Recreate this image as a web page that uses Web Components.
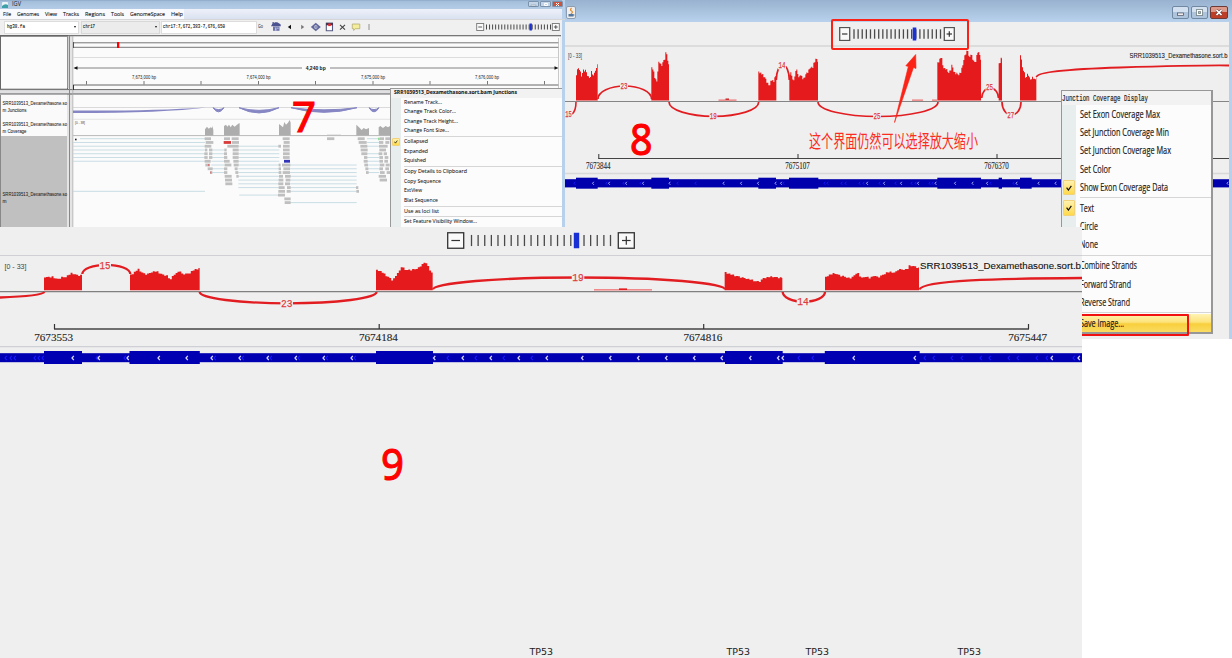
<!DOCTYPE html>
<html lang="en">
<head>
<meta charset="utf-8">
<title>IGV</title>
<style>
html,body{margin:0;padding:0;background:#fff;overflow:hidden}
body{width:1232px;height:658px;position:relative;font-family:"Open Sans","Noto Sans",sans-serif;color:#222}
</style>
</head>
<body>
<igv-desktop></igv-desktop>
<script>
const make = (name, html, after) => customElements.define(name, class extends HTMLElement {
  connectedCallback() {
    if (this.shadowRoot) return;
    const t = document.createElement('template');
    t.innerHTML = typeof html === 'function' ? html(this) : html;
    this.attachShadow({mode: 'open'}).appendChild(t.content.cloneNode(true));
    if (after) after(this);
  }
});

/* ---------- drawing helpers ---------- */
const f = n => Math.round(n * 100) / 100;
// Stepped coverage histogram from a coarse profile, with a little read-depth noise
function hist(pts, ox, oy, base, step, noise) {
  const p = []; for (let i = 0; i < pts.length; i += 2) p.push([ox + pts[i] / 3, oy + pts[i + 1] / 3]);
  const x0 = p[0][0], x1 = p[p.length - 1][0];
  let d = `M${f(x0)} ${base}`, k = 0, n = 0;
  for (let x = x0; x < x1 - .05; x += step) {
    const m = Math.min(x + step / 2, x1);
    while (k < p.length - 2 && p[k + 1][0] < m) k++;
    const a = p[k], b = p[k + 1], r = Math.min(1, (m - a[0]) / (b[0] - a[0] || 1));
    const y = a[1] + (b[1] - a[1]) * r + [0, .6, -.5, .2, -.8, .7, 0, -.3, .9, -.6][n++ % 10] * noise;
    d += `V${f(y)}H${f(Math.min(x + step, x1))}`;
  }
  return `<path d="${d}V${base}Z" fill="#e51a1c"/>`;
}
// Half-ellipse junction arc between two points on the same level
const arc = (x0, y, x1, peak, w = 2.3) =>
  `<path d="M${x0} ${y}A${f((x1 - x0) / 2)} ${f(Math.abs(peak - y))} 0 0 ${peak < y ? 1 : 0} ${x1} ${y}" fill="none" stroke="#e21d22" stroke-width="${w}"/>`;
const num = (t, x, y, w, s) =>
  `<rect x="${x - w / 2 - .5}" y="${y - s * .75}" width="${w + 1}" height="${s * .9}" fill="#efefef"/><text x="${x}" y="${y}" text-anchor="middle" textLength="${w}" lengthAdjust="spacingAndGlyphs" font-family="Liberation Mono" font-size="${s}" fill="#e0393c" stroke="#e0393c" stroke-width=".25">${t}</text>`;
const txt = (t, x, y, w, s, fam = 'Open Sans', fill = '#222', extra = '') =>
  `<text x="${x}" y="${y}" textLength="${w}" lengthAdjust="spacingAndGlyphs" font-family="${fam}" font-size="${s}" fill="${fill}" ${extra}>${t}</text>`;
const ln = (x0, y0, x1, y1, c, w = 1) => `<path d="M${x0} ${y0}L${x1} ${y1}" stroke="${c}" stroke-width="${w}"/>`;
const box = (x, y, w, h, c) => `<rect x="${f(x)}" y="${f(y)}" width="${f(w)}" height="${f(h)}" fill="${c}"/>`;
const chev = (xs, y, c, s, w = 1.1) => xs.map(x => `<path d="M${f(x + s)} ${y - s * 1.15}L${f(x)} ${y}L${f(x + s)} ${y + s * 1.15}" fill="none" stroke="${c}" stroke-width="${w}"/>`).join('');

/* ---------- desktop ---------- */
make('igv-desktop', `<style>
:host{display:block;position:relative;width:1232px;height:658px;background:#fff}
junction-window{position:absolute;left:562px;top:0}
igv-main{position:absolute;left:0;top:0}
sashimi-view{position:absolute;left:0;top:227px}
step-mark{position:absolute}
</style>
<junction-window></junction-window><igv-main></igv-main><sashimi-view></sashimi-view>
<step-mark style="left:291.5px;top:92px" size="41" w="24">7</step-mark>
<step-mark style="left:630px;top:113px" size="43" w="22.5">8</step-mark>
<step-mark style="left:381px;top:437px" size="43.5" w="23">9</step-mark>`);

make('step-mark', el => `<style>
:host{display:block;line-height:1.2;height:52px;color:#fe0000;-webkit-text-stroke:1.1px #fe0000;font-family:"Noto Sans",sans-serif;font-size:${el.getAttribute('size')}px}
</style><fit-text w="${el.getAttribute('w')}"><slot></slot></fit-text>`);

/* ---------- main IGV window ---------- */
make('igv-main', `<style>
:host{display:flex;flex-direction:column;width:565px;height:227px;overflow:hidden;background:#f0f0f0;font:6px/1 "Open Sans",sans-serif;color:#222}
.title{display:flex;align-items:center;height:9px;background:linear-gradient(90deg,transparent 562px,#b7d0eb 562px),linear-gradient(#8ba8c8 0,#a5bfdb 18%,#b4cce6 100%);gap:4px;padding:0 2px 0 2px;box-sizing:border-box;flex:none}
.title b{flex:1;font-weight:400}
.btns{display:flex;gap:1px}
.btns i{width:11px;height:6px;border:.5px solid #7c93ad;border-radius:1px;box-sizing:border-box;background:#c4d5e8;margin-bottom:1px}
.btns i svg{display:block;margin:auto}
.btns i:last-child{background:#c9553f}
.menu{display:flex;align-items:center;height:10px;padding:0 0 1px 3px;box-sizing:border-box;gap:6px;background:linear-gradient(90deg,transparent 562px,#b7d0eb 562px),linear-gradient(90deg,#f8fafd 0 184px,transparent 184px),linear-gradient(#eef1f9,#d9e1f0);flex:none;-webkit-text-stroke:.12px #222}
.tools{display:flex;align-items:center;height:16px;background:linear-gradient(90deg,#f0f0f0 562px,#b7d0eb 562px);border-top:1px solid #d6d6d6;box-sizing:border-box;padding:0 0 1px 4px;flex:none}
.combo{display:flex;align-items:center;justify-content:space-between;height:13px;padding:0 2px;box-sizing:border-box;background:#fff;border:.5px solid #ddd}
.combo.g{background:#ececec;border:1px solid #d8d8d8}
.combo fit-text{-webkit-text-stroke:.12px #222;font:5.5px/1 "Liberation Mono"}
.arr{width:0;height:0;border:1.8px solid transparent;border-top:2.4px solid #111;border-bottom:0}
svg{display:block}
.body{position:relative;flex:1}
popup-menu{position:absolute;left:390px;top:53px}
</style>
<div class="title"><svg width="6" height="6"><rect width="6" height="5" rx="1" fill="#e9f3f6"/><path d="M0 4q3-3 6-1v3H0z" fill="#3ba0a8"/></svg><b><fit-text w="9" style="font-size:6.5px">IGV</fit-text></b>
<div class="btns"><i><svg width="9" height="5"><rect x="2" y="3" width="5" height="1" fill="#fff" stroke="#567" stroke-width=".3"/></svg></i><i><svg width="9" height="5"><path d="M3.5 1.5h3v2h-3z" fill="none" stroke="#fff"/></svg></i><i><svg width="9" height="5"><path d="M3 1l3 3M6 1l-3 3" stroke="#fff"/></svg></i></div></div>
<div class="menu"><fit-text w="8">File</fit-text><fit-text w="22">Genomes</fit-text><fit-text w="12">View</fit-text><fit-text w="16">Tracks</fit-text><fit-text w="20">Regions</fit-text><fit-text w="13">Tools</fit-text><fit-text w="35">GenomeSpace</fit-text><fit-text w="12">Help</fit-text></div>
<div class="tools">
<div class="combo" style="width:75px"><fit-text w="18">hg38.fa</fit-text><span class="arr"></span></div>
<div class="combo g" style="width:79px;margin-left:2px;padding-left:1px"><fit-text w="12">chr17</fit-text><span class="arr"></span></div>
<div class="combo" style="width:96px;margin-left:1px;padding-left:1px"><fit-text w="62">chr17:7,672,383-7,676,650</fit-text></div>
<fit-text w="5" style="font-size:5.5px;margin-left:1px">Go</fit-text>
<svg width="110" height="14" viewBox="263 20 110 14" style="margin-right:103px">
<path d="M271 26.3l1.2-2.4 3-1.6h2l3.3 2 .4 2z" fill="#4b5290"/><path d="M273 26.5h6.5v4.3H273z" fill="#6b72aa"/><path d="M275 27.5h1.5v3.3H275zM277.3 27.5h1.2v1.5h-1.2z" fill="#b9bddb"/><path d="M272.5 22h1.3v2h-1.3z" fill="#4b5290"/>
<path d="M291 24.8v4.4l-3.2-2.2z" fill="#111"/><path d="M301.2 24.8v4.4l3-2.2z" fill="#777"/>
<path d="M310.8 27l5-4.3 5 4.3-5 4.3z" fill="#62699a"/><circle cx="315.8" cy="27" r="1.7" fill="#dfe2f2"/><path d="M314.6 27h2.5" stroke="#464e87"/>
<path d="M326.3 23.3h6.2v7.4h-6.2z" fill="#fff" stroke="#555b82" stroke-width="1.1"/><path d="M326 22.8h7v2.5h-7z" fill="#3d3956"/><path d="M328.2 23.5h2.6v2.6h-2.6z" fill="#e62828"/>
<path d="M340 24.8l5 4.9M345 24.8l-5 4.9" stroke="#444" stroke-width="1.1"/>
<path d="M352.3 24h7.5v4.7h-4.5l-1.6 1.8v-1.8h-1.4z" fill="#f3ed9c" stroke="#aaa36a" stroke-width=".7"/>
<path d="M369 24v6" stroke="#777" stroke-width=".8"/></svg>
<zoom-slider kind="small"></zoom-slider>
</div>
<div class="body"><igv-tracks></igv-tracks>
<popup-menu kind="small" heading="SRR1039513_Dexamethasone.sort.bam Junctions">
<menu-row w="38">Rename Track...</menu-row><menu-row w="52">Change Track Color...</menu-row><menu-row w="54">Change Track Height...</menu-row><menu-row w="45">Change Font Size...</menu-row><menu-sep></menu-sep>
<menu-row w="24" checked>Collapsed</menu-row><menu-row w="24">Expanded</menu-row><menu-row w="22">Squished</menu-row><menu-sep></menu-sep>
<menu-row w="63">Copy Details to Clipboard</menu-row><menu-row w="37">Copy Sequence</menu-row><menu-row w="18">ExtView</menu-row><menu-row w="34">Blat Sequence</menu-row><menu-sep></menu-sep>
<menu-row w="35">Use as loci list</menu-row><menu-sep></menu-sep><menu-row w="73">Set Feature Visibility Window...</menu-row>
</popup-menu></div>`);

make('igv-tracks', () => {
  let s = '';
  s += box(0, 35, 561, 192, '#e4e4e4');
  s += box(0, 35, 68, 55, '#666') + box(1, 36.7, 66, 52, '#fbfbfb');
  s += box(72.5, 35, 488, 55, '#fbfbfb') + box(68, 35, 493, 1.3, '#777');
  s += box(0, 89, 561, 1.3, '#777') + box(0, 90.3, 561, 3, '#e0dfe2') + box(0, 93.2, 561, 1.6, '#8b8b8e');
  s += box(0, 94.8, 67, 133, '#fafafa') + box(0, 95, 1, 133, '#888') + box(1, 136, 66, 92, '#c0c0c0');
  s += box(72.5, 94.8, 488, 133, '#fbfbfb');
  s += ln(69.5, 36, 69.5, 227, '#888') + ln(72.8, 36, 72.8, 227, '#aaa', .8) + ln(68, 36, 68, 88, '#bbb', 1);
  // cytoband and ruler
  s += ln(73, 42.8, 559, 42.8, '#777') + ln(73, 47.3, 559, 47.3, '#777') + ln(73.5, 42, 73.5, 48, '#555') + box(117, 42, 2.3, 6, '#f00');
  s += ln(73, 57.5, 558, 57.5, '#ddd') + ln(75, 68, 302, 68, '#666', .8) + ln(330, 68, 556, 68, '#666', .8);
  s += '<path d="M73.5 68l4-1.7v3.4zM558.5 68l-4-1.7v3.4z" fill="#111"/>';
  s += txt('4,240 bp', 305.7, 70.2, 20, 6, 'Liberation Sans', '#111', 'font-weight="bold"');
  [['7,673,000 bp', 144], ['7,674,000 bp', 258.5], ['7,675,000 bp', 373], ['7,676,000 bp', 487]].forEach(a => s += txt(a[0], a[1] - 12, 79, 24, 4.6, 'Liberation Sans', '#222'));
  [86.5, 144, 201, 258.5, 315.5, 373, 430, 487.5, 544.5].forEach(x => s += ln(x, 81, x, 84.5, '#555', .8));
  s += ln(73, 85, 559, 85, '#666') + ln(73.5, 85, 73.5, 90, '#333') + ln(558.5, 38, 558.5, 89, '#bbb', .8);
  // names
  const nm = 'SRR1039513_Dexamethasone.so';
  [[nm, 2.5, 105.2, 64.5], ['m Junctions', 2.5, 111.8, 24], [nm, 2.5, 125.8, 64.5], ['m Coverage', 2.5, 132.5, 24], [nm, 2.5, 196.2, 64.5], ['m', 2.5, 202.8, 4]].forEach(a => s += txt(...a, 4.5, 'Liberation Sans', '#222', 'stroke="#222" stroke-width=".05"'));
  s += ln(73, 107.5, 561, 107.5, '#ccc', .7) + ln(73, 119.3, 561, 119.3, '#ddd', .8) + ln(73, 135.6, 561, 135.6, '#b9b9b9', 1);
  s += txt('[0 - 38]', 75, 124, 10, 4, 'Liberation Sans', '#444');
  // junction crescents
  const J = '#8686c4';
  s += `<path d="M73 110.4Q150 111 206 107.4Q165 112.9 73 112.9z" fill="${J}"/>`;
  [[213, 224, 116, 111.5], [239, 279, 118.2, 113], [291, 357, 117, 112], [369, 379, 116, 111.5]].forEach(a => s += `<path d="M${a[0]} 107.7Q${(a[0] + a[1]) / 2} ${a[3]} ${a[1]} 107.7Q${(a[0] + a[1]) / 2} ${a[2]} ${a[0]} 107.7z" fill="${J}" stroke="${J}" stroke-width="1"/>`);
  // coverage
  const C = (d) => { let q = d.map((v, i) => i % 2 ? f(90 + v / 3) : f(190 + v / 3)), o = `M${q[0]} 135.5`; for (let i = 0; i < q.length; i += 2) o += `L${q[i]} ${q[i + 1]}`; return `<path d="${o}V135.5Z" fill="#adadad"/>`; };
  s += C([45, 118, 51, 110, 56, 116, 62, 112, 66, 114, 67, 107, 70, 120]) + C([102, 108, 108, 104, 112, 110, 117, 104, 122, 112, 127, 104, 134, 110, 141, 104, 147, 100, 149, 100]) + C([267, 102, 272, 106, 279, 112, 283, 96, 288, 104, 294, 98, 299, 90, 302, 98]) + C([499, 104, 507, 112, 515, 120, 521, 114, 528, 118, 537, 114]) + C([566, 112, 571, 108, 579, 114, 587, 108, 594, 112, 600, 108]) + box(327, 134.7, 14, .9, '#bbb');
  // reads
  const y = r => 138.7 + r * 3.76, L = (r, a, b) => ln(190 + a / 3, y(r), 190 + b / 3, y(r), '#c3dae2', .9);
  s += L(0, -330, 45);
  for (let r = 1; r < 7; r++) s += L(r, -351, 45);
  for (let r = 3; r < 10; r++) s += L(r, 64, 106);
  for (let r = 2; r < 14; r++) s += L(r, 145, 268);
  for (let r = 7; r < 15; r++) s += L(r, 298, 500);
  s += L(15, 148, 268) + L(14, -351, 45) + L(17, 300, 500);
  [0, 1, 2, 4, 5, 6, 7, 8, 9].forEach(r => s += L(r, 531, 568));
  const R = {0: [44, 63, 102, 120, 125, 146, 278, 299, 411, 433, 503, 524, 569, 582, 586, 600], 1: [47, 70, 126, 147, 281, 299, 506, 530, 567, 580, 586, 598], 2: [44, 64, 112, 146, 265, 273, 279, 299, 511, 532, 567, 593], 3: [45, 52, 57, 67, 103, 110, 128, 146, 279, 299, 512, 533, 568, 588], 4: [43, 53, 57, 67, 102, 111, 128, 146, 279, 299, 514, 532, 566, 577, 581, 591], 5: [43, 53, 57, 67, 102, 112, 128, 146, 279, 299, 522, 532, 568, 579, 584, 595], 6: [44, 62, 102, 119, 130, 146, 521, 533, 568, 579, 583, 594], 7: [46, 60, 104, 124, 131, 146, 266, 272, 276, 301, 523, 534, 569, 583, 587, 599], 8: [53, 68, 102, 112, 134, 143, 266, 273, 280, 300, 526, 535, 568, 579, 586, 597], 9: [60, 67, 102, 112, 136, 145, 266, 274, 278, 300, 528, 536, 570, 584, 590, 600], 10: [104, 125, 139, 146, 267, 279, 285, 302, 566, 588], 11: [105, 126, 266, 280, 287, 301, 569, 591], 12: [106, 127, 265, 280, 285, 300], 13: [266, 284, 291, 302, 498, 505], 14: [265, 285, 290, 302, 499, 507], 15: [264, 285], 16: [283, 302], 17: [284, 302]};
  for (const r in R) for (let i = 0; i < R[r].length; i += 2) s += box(190 + R[r][i] / 3, y(r) - 1.4, (R[r][i + 1] - R[r][i]) / 3, 2.8, '#bfbfbf');
  s += box(223.7, y(1) - 1.4, 7.3, 2.8, '#d83a3a') + box(284, y(6) - 1.4, 6, 2.8, '#3434b8') + box(378.3, y(0) - 1, 1.2, 2.5, '#6fd66f') + box(208.2, y(7) - 1, 1, 2, '#d66') + box(210.3, y(9) - 1, 1, 2, '#d66') + box(75, y(0), 1.6, 1.6, '#222');
  return `<style>:host{display:block;width:565px;height:192px}svg{display:block}</style><svg width="565" height="192" viewBox="0 35 565 192">${s}${box(561, 35, 1.2, 192, '#f0f0f0')}${box(562, 35, 3, 192, '#b7d0eb')}</svg>`;
});

/* ---------- menus ---------- */
make('popup-menu', el => {
  const small = el.getAttribute('kind') === 'small';
  return `<style>
:host{display:flex;flex-direction:column;box-sizing:border-box;${small
    ? 'width:172px;height:141px;border:.8px solid #999;border-right:0;--row:9.6px;--sep:1.1px;--strip:9.5px;--gap:3px;--up:0px;font-size:5.8px;background:linear-gradient(90deg,#e8eeee 10px,#fcfcfc 10px);-webkit-text-stroke:.08px #202020'
    : 'width:152px;height:244px;border:1px solid #979797;border-right-width:2px;border-bottom-width:2px;--row:18.35px;--sep:2.4px;--strip:14px;--gap:4px;--up:-1px;font-size:11px;background:linear-gradient(90deg,#e8eeee 14px,#fcfcfc 14px);-webkit-text-stroke:.2px #202020'};line-height:1;color:#202020}
.h{display:flex;align-items:center;background:#f2f2f2;flex:none;${small ? 'height:8.8px;padding:0 0 1px 2.500px;box-sizing:border-box;font-weight:700;font-size:5.6px' : 'height:14px;padding:1px 0 0 0;box-sizing:border-box;font:9.5px/1 "Liberation Mono"'}}
</style><div class="h"><fit-text w="${small ? 123 : 86}">${el.getAttribute('heading')}</fit-text></div><slot></slot>`;
});
make('menu-row', el => `<style>
:host{display:flex;align-items:center;height:var(--row);flex:none;${el.hasAttribute('hot') ? 'background:linear-gradient(#fff3b5 0,#fde37a 45%,#f8cf3d 55%,#fbdc62 100%)' : ''}}
.i{width:var(--strip);height:100%;margin-right:var(--gap);display:flex;align-items:center;justify-content:center;flex:none}
.c{width:88%;height:86%;background:linear-gradient(#fff2b0,#ffd94a);border:.5px solid #f0d27a;box-sizing:border-box;border-radius:1px;display:flex;align-items:center;justify-content:center}
fit-text{margin-top:calc(var(--up) * 2)}
</style><span class="i">${el.hasAttribute('checked') ? '<span class="c"><svg width="58%" viewBox="0 0 10 10"><path d="M1 4.5l3 4L9 1.5" fill="none" stroke="#111" stroke-width="2"/></svg></span>' : ''}</span><fit-text w="${el.getAttribute('w')}"><slot></slot></fit-text>`);
make('menu-sep', `<style>:host{display:flex;align-items:center;height:var(--sep);flex:none;padding-left:calc(var(--strip) + var(--gap))}i{height:1px;flex:1;background:#d6d6d6}</style><i></i>`);

/* ---------- zoom slider ---------- */
make('zoom-slider', el => {
  const K = {
    small: {w: 84, h: 8, b: 7, bh: 7, t0: 10.5, t1: 74.5, n: 22, th: 54.7, tw: 2.4, o: '#777'},
    mid: {w: 116, h: 14, b: 10, bh: 13, t0: 15, t1: 101.5, n: 22, th: 75.5, tw: 3.6, o: '#555'},
    big: {w: 188, h: 17, b: 16, bh: 15.5, t0: 24.5, t1: 163.5, n: 22, th: 129.5, tw: 5.4, o: '#333'}
  }[el.getAttribute('kind')];
  const m = K.h / 2; let s = '';
  for (let i = 0; i < K.n; i++) { const x = K.t0 + (K.t1 - K.t0) * i / (K.n - 1); s += ln(f(x), m - K.bh * .36, f(x), m + K.bh * .36, '#4a4a4a', K.w > 100 ? 1.3 : 1); }
  const bt = (x, plus) => { const c = x + K.b / 2, r = K.b * .27; return `<rect x="${x}" y="${m - K.bh / 2}" width="${K.b}" height="${K.bh}" fill="#fafafa" stroke="${K.o}" stroke-width="${K.w > 100 ? 1.3 : .9}"/>` + ln(c - r, m, c + r, m, '#333', K.w > 100 ? 1.2 : .8) + (plus ? ln(c, m - r, c, m + r, '#333', K.w > 100 ? 1.2 : .8) : ''); };
  s += box(K.th - K.tw / 2, m - K.bh / 2, K.tw, K.bh, '#1830d4') + bt(.7, 0) + bt(K.w - K.b - .7, 1);
  return `<style>:host{display:block}svg{display:block}</style><svg width="${K.w}" height="${K.h}">${s}</svg>`;
});

/* ---------- junction window ---------- */
make('junction-window', `<style>
:host{display:flex;flex-direction:column;width:670px;height:339px;background:#b7d0eb;box-sizing:border-box;overflow:hidden}
.t{height:22px;display:flex;align-items:center;justify-content:space-between;padding:3px 4px 0 4px;box-sizing:border-box;background:linear-gradient(#98b2cf,#b9d1ec);flex:none}
.b{display:flex;gap:2px}
.b i{width:17px;height:13px;box-sizing:border-box;border:1px solid #7188a3;border-radius:2px;background:linear-gradient(#d2e0ef 45%,#aec4dc 50%);display:block}
.b i:last-child{background:linear-gradient(#dd9a8b 45%,#bd3f27 50%);border-color:#6d3a38;width:18px}
svg{display:block}
.c{flex:1;margin:0 3px;background:#efefef;position:relative}
popup-menu{position:absolute;left:496px;top:68px}
.call{position:absolute;left:265.5px;top:-3px;width:138.5px;height:31px;border:2px solid #fa2216;border-radius:2px;box-sizing:border-box;display:flex;align-items:center;padding:0 0 2px 6px}
.save{position:absolute;left:497px;top:291.5px;width:127px;height:22px;border:2px solid #f21111;border-radius:1px;box-sizing:border-box}
.note{position:absolute;left:244px;top:106px;color:#fb2c22;font:18px/24px "Noto Sans CJK SC",sans-serif}
</style>
<div class="t"><svg width="11" height="13"><rect x=".5" y=".5" width="9" height="12" rx="1.5" fill="#eee" stroke="#8c9db2"/><path d="M5.5 2q-2 2 0 3t-.5 3" fill="none" stroke="#e28a2b" stroke-width="1.2"/><path d="M2.5 8h5v2.5h-5zM7.5 8.5h1v1h-1" fill="#54789c"/></svg>
<div class="b"><i><svg width="15" height="11"><rect x="4.5" y="6" width="6" height="2.3" fill="#fff" stroke="#556" stroke-width=".8"/></svg></i><i><svg width="15" height="11"><rect x="5.5" y="3.5" width="4" height="4" fill="none" stroke="#566" stroke-width="2.6"/><rect x="5.5" y="3.5" width="4" height="4" fill="none" stroke="#fff" stroke-width="1.4"/></svg></i><i><svg width="16" height="11"><path d="M5.5 3l5 5M10.5 3l-5 5" stroke="#644" stroke-width="3"/><path d="M5.5 3l5 5M10.5 3l-5 5" stroke="#fff" stroke-width="1.7"/></svg></i></div></div>
<div class="c"><junction-plot></junction-plot>
<div class="call"><zoom-slider kind="mid"></zoom-slider></div>
<fit-text class="note" w="169">这个界面仍然可以选择放大缩小</fit-text>
<popup-menu kind="large" heading="Junction Coverage Display">
<menu-row w="80">Set Exon Coverage Max</menu-row><menu-row w="89">Set Junction Coverage Min</menu-row><menu-row w="91">Set Junction Coverage Max</menu-row><menu-row w="31">Set Color</menu-row><menu-row w="88" checked>Show Exon Coverage Data</menu-row><menu-sep></menu-sep>
<menu-row w="14" checked>Text</menu-row><menu-row w="18">Circle</menu-row><menu-row w="18">None</menu-row><menu-sep></menu-sep>
<menu-row w="57">Combine Strands</menu-row><menu-row w="51">Forward Strand</menu-row><menu-row w="50">Reverse Strand</menu-row><menu-sep></menu-sep>
<menu-row w="44" hot>Save Image...</menu-row>
</popup-menu><div class="save"></div></div>`);

make('junction-plot', () => {
  let s = ln(565, 46, 1230, 46, '#d6d6d6', 1.5) + ln(565, 173.5, 1230, 173.5, '#d8d8d8', 1.3);
  const H = (p, o) => s += hist(p, o, 0, 100.6, 1, 1.4);
  H([48, 238, 52, 205, 58, 208, 65, 228, 70, 210, 78, 212, 84, 230, 92, 235, 95, 205, 99, 235, 104, 212, 109, 218, 110, 190, 113, 190], 560);
  H([274, 200, 280, 208, 285, 236, 290, 246, 294, 210, 297, 182, 302, 190, 304, 205, 309, 182, 314, 182, 317, 160, 322, 160, 324, 190, 327, 195], 560);
  H([595, 213, 605, 222, 615, 232, 622, 248, 628, 258, 634, 240, 641, 245, 644, 232, 649, 228], 560);
  H([688, 232, 692, 212, 696, 232, 702, 245, 706, 215, 712, 208, 716, 235, 722, 222, 730, 240, 738, 222, 746, 212, 753, 200, 758, 205, 762, 190, 768, 175, 774, 182], 560);
  H([142, 188, 147, 185, 152, 172, 157, 180, 160, 205, 168, 205, 175, 218, 183, 210, 187, 190, 191, 215, 205, 224, 213, 218, 218, 195, 225, 165, 230, 155, 235, 152, 238, 178, 243, 162, 250, 180, 256, 190, 262, 160, 267, 153, 270, 170, 273, 180], 890);
  H([326, 190, 330, 190, 332, 175, 336, 175], 890);
  H([390, 165, 394, 168, 396, 200, 402, 215, 408, 235, 414, 218, 420, 240, 428, 232, 434, 240, 439, 230], 890);
  s += box(718.5, 99.6, 18, 1, '#e55') + box(725.5, 98.5, 3.5, 1.4, '#c22') + box(912, 99.6, 11, 1, '#e55') + box(932, 99.6, 5, 1, '#e55');
  s += ln(565, 101.5, 1230, 101.5, '#858585', 1.2);
  const A = (a, b, c, d) => s += arc(a, b, c, d, 1.7);
  s += '<path d="M572 114Q576 111 576 102" fill="none" stroke="#e21d22" stroke-width="1.6"/>';
  A(598, 99, 651.5, 86); A(669, 102, 758.7, 116.3); A(776.3, 80, 789.3, 65); A(818, 102, 938, 116.5);
  A(981.7, 98, 998.5, 88); A(1002, 102, 1021, 115);
  s += '<path d="M1036.500 77Q1037 70 1120 67.500T1230 65.500" fill="none" stroke="#e21d22" stroke-width="1.8"/>';
  s += num('15', 568.5, 117.3, 6.5, 9) + num('23', 624, 89, 7, 9) + num('19', 713.3, 119.3, 7, 9) + num('14', 782, 68, 7, 9) + num('25', 877, 119.3, 7, 9) + num('25', 989.5, 89.5, 7, 9) + num('27', 1010.7, 117.8, 7, 9);
  s += txt('[0 - 33]', 568, 58.2, 14, 7.5, 'Liberation Sans', '#444') + txt('SRR1039513_Dexamethasone.sort.b', 1129.5, 58, 98, 8, 'Liberation Sans', '#222', 'stroke="#222" stroke-width=".12"');
  s += ln(598.5, 158.5, 1232, 158.5, '#444', 1.1);
  [598.8, 798, 997].forEach((x, i) => s += ln(x, 154, x, 159, '#333') + txt(['7673844', '7675107', '7676370'][i], x - 12.8, 168.8, 24.5, 10, 'Liberation Serif', '#222', 'stroke="#222" stroke-width=".1"'));
  s += box(565, 179.2, 665, 8.2, '#0000ad');
  [[48, 113, 560], [274, 327, 560], [595, 648, 560], [687, 775, 560], [142, 273, 890], [326, 336, 890], [390, 425, 890]].forEach(a => s += box(a[2] + a[0] / 3, 177.7, (a[1] - a[0]) / 3, 11, '#0000ad'));
  s += chev([574, 606, 623, 640, 677, 695, 783, 824, 827, 841, 845, 859, 863, 879, 895, 911, 915, 929, 932, 990, 1013], 183.3, '#1c1cff', 1.3, .9);
  s += chev([592.5, 608.5, 625.5, 642.5, 669, 723, 740.5, 757.5, 775, 780.5, 866.5, 883.5, 900.5, 917.5, 935, 954.5, 972, 986.5, 1016, 1038, 1055, 1227], 183.3, '#b9beff', 1.3, .9);
  s += '<path d="M894.5 122.5L908.3 66.5 905.8 65.8 915.7 54.5 916 68.5 913.5 67.5z" fill="#fb2216" stroke="#fb2216" stroke-width=".6"/>';
  return `<style>:host{display:block}svg{display:block}</style><svg width="664" height="317" viewBox="565 22 664 317">${s}</svg>`;
});

/* ---------- enlarged sashimi view ---------- */
make('sashimi-view', () => {
  let s = ln(0, 255.3, 1082, 255.3, '#cfd0d6', 1.2) + ln(0, 346.7, 1082, 346.7, '#cfd0d6', 1.2);
  const H = (p, o) => s += hist(p, o, 228, 290.3, 1.9, .8);
  H([132, 150, 142, 145, 150, 150, 155, 145, 165, 150, 175, 153, 185, 148, 195, 148, 205, 142, 215, 136, 225, 138, 235, 142, 246, 142], 0);
  H([390, 140, 400, 137, 407, 130, 415, 124, 425, 132, 435, 138, 445, 138, 455, 132, 470, 130, 480, 136, 490, 140, 500, 142, 508, 152, 515, 152, 520, 142, 530, 137, 538, 126, 545, 137, 560, 138, 570, 135, 578, 128, 590, 124, 597, 120, 599, 120], 0);
  H([48, 124, 58, 128, 68, 134, 78, 142, 88, 148, 97, 156, 105, 150, 112, 135, 120, 128, 126, 115, 134, 124, 142, 126, 165, 124, 175, 120, 188, 110, 190, 102, 198, 104, 205, 115, 212, 128, 218, 138], 360);
  H([14, 130, 22, 136, 35, 140, 50, 144, 65, 148, 80, 152, 95, 156, 110, 160, 122, 160, 130, 150, 145, 148, 160, 146, 172, 148, 187, 150], 720);
  H([315, 148, 330, 140, 345, 136, 360, 142, 380, 148, 395, 152, 405, 138, 415, 136, 425, 150, 440, 145, 450, 152, 462, 142, 475, 148, 490, 140, 500, 134, 515, 132, 525, 134, 535, 124, 550, 125, 562, 124, 570, 112, 585, 115, 597, 120], 720);
  s += box(594, 289, 58, 1.6, '#f08a8a') + box(619, 288.4, 8, 1.6, '#e51a1c');
  s += ln(0, 291.6, 1082, 291.6, '#808080', 1.3);
  s += '<g fill="none" stroke="#e21d22" stroke-width="2.3"><path d="M0 297.5Q42 296 44.5 292"/><path d="M919.5 289.5C922 280 1000 278.5 1082 278"/></g>';
  s += arc(82.3, 274, 130.3, 264.8) + arc(199.7, 292, 376.5, 303.3) + arc(433, 289.5, 725, 277.5) + arc(782.7, 292, 825, 301.7);
  s += num('15', 105, 268.6, 11, 11.5) + num('23', 286.7, 306.6, 11.5, 11.5) + num('19', 578, 280.8, 11.5, 11.5) + num('14', 803, 305.1, 11.5, 11.5);
  s += txt('[0 - 33]', 4.5, 269, 22, 7.5, 'Liberation Sans', '#444') + txt('SRR1039513_Dexamethasone.sort.b', 920, 269.3, 161, 9.6, 'Liberation Sans', '#111', 'stroke="#111" stroke-width=".1"');
  s += ln(54, 329, 1029, 329, '#444', 1.3);
  [[54.5, '7673553'], [379.2, '7674184'], [703.7, '7674816'], [1028.5, '7675447']].forEach(a => s += ln(a[0], 324, a[0], 329, '#333', 1.2) + txt(a[1], a[0] - 20.3, 340.9, 39, 11, 'Liberation Serif', '#222', 'stroke="#222" stroke-width=".1"'));
  s += box(0, 353.2, 1082, 9, '#0000b2');
  [[44, 82], [129.5, 199.8], [376, 433], [725, 782.7], [824.8, 919.7]].forEach(a => s += box(a[0], 351, a[1] - a[0], 13, '#0000b2'));
  s += chev([5, 10, 14, 34, 38, 42, 96, 124, 214, 242, 270, 298, 326, 354, 447, 475, 503, 531, 798, 812, 924, 933, 951, 961, 980, 989, 1008, 1017, 1036, 1046, 1073], 358, '#1a1aff', 1.8);
  s += chev([72, 98, 127, 158, 186, 211, 239, 267, 295, 323, 351, 433.5, 462, 490, 518, 546, 581.5, 609.5, 637.5, 665.5, 693.5, 721, 749.5, 777.5, 782, 853, 914, 1051, 1078], 358, '#d4d6ff', 1.8, 1.3);
  s += [541, 738, 817, 969].map(x => txt('TP53', x - 11.5, 655, 23.5, 9.3, 'DejaVu Sans', '#222')).join('');
  return `<style>:host{display:flex;flex-direction:column;width:1082px;height:431px;background:#efefef}svg{display:block}.z{display:flex;height:28px;padding:5px 0 0 447px;box-sizing:border-box;flex:none}</style>
<div class="z"><zoom-slider kind="big"></zoom-slider></div><svg width="1082" height="403" viewBox="0 255 1082 403">${s}</svg>`;
});

/* Text run scaled horizontally to an exact width */
make('fit-text', `<style>:host{display:inline-block;white-space:nowrap;flex:none}span{display:inline-block;transform-origin:0 50%}</style><span><slot></slot></span>`, el => {
  const sp = el.shadowRoot.querySelector('span'), w = +el.getAttribute('w');
  sp.style.transform = `scaleX(${w / sp.offsetWidth})`;
  const n = sp.getBoundingClientRect().width;
  if (n) sp.style.transform = `scaleX(${w / sp.offsetWidth * w / n})`;
  el.style.width = w + 'px';
});
</script>
</body>
</html>
